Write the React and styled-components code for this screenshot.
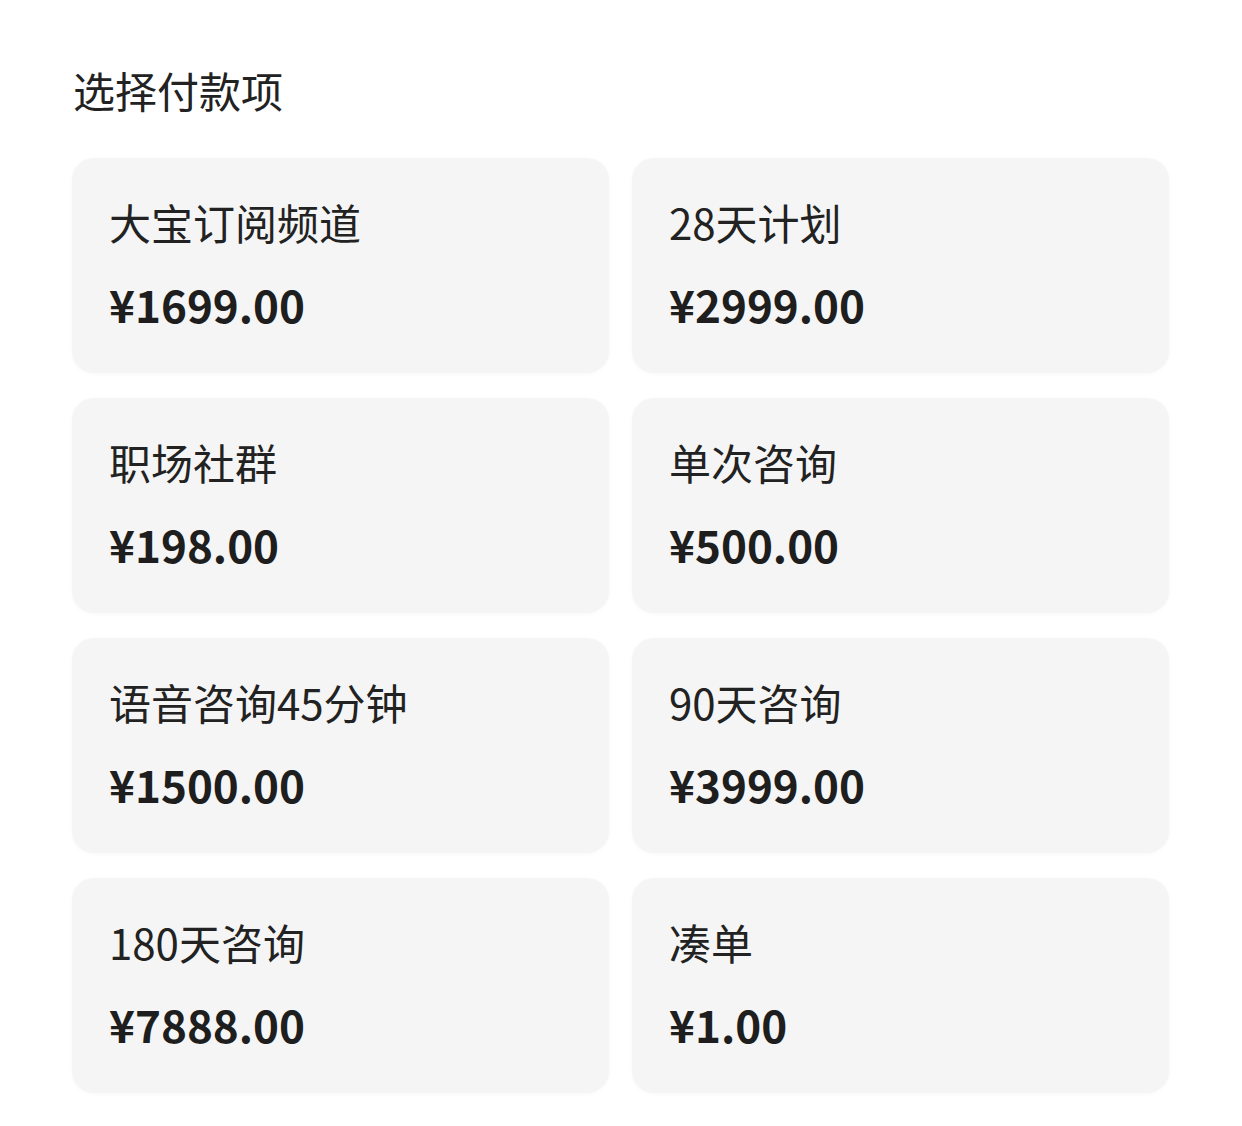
import React from "react";
import styled, { createGlobalStyle } from "styled-components";

const GlobalStyle = createGlobalStyle`
  html, body {
    margin: 0;
    padding: 0;
    background: #ffffff;
  }
  body {
    font-family: "Noto Sans CJK SC", "Noto Sans", sans-serif;
    color: #222222;
  }
`;

const Page = styled.div`
  padding: 62px 73px 32px 72px;
`;

const Heading = styled.h2`
  margin: 0 0 40px 1px;
  font-size: 42px;
  font-weight: 400;
  line-height: 56px;
  color: #222222;
`;

const Grid = styled.div`
  display: grid;
  grid-template-columns: 1fr 1fr;
  column-gap: 23px;
  row-gap: 25px;
`;

const Card = styled.div`
  height: 215px;
  box-sizing: border-box;
  padding: 36px 37px 0;
  background: #f5f5f5;
  border-radius: 22px;
  box-shadow: 0 1px 4px rgba(0, 0, 0, 0.03);
  display: flex;
  flex-direction: column;
  gap: 26px;
`;

const Name = styled.div`
  font-size: 42px;
  line-height: 56px;
  font-weight: 400;
  color: #222222;
`;

const Price = styled.div`
  font-size: 44px;
  line-height: 56px;
  font-weight: 600;
  color: #1e1e1e;
`;

const items = [
  { name: "大宝订阅频道", price: "¥1699.00" },
  { name: "28天计划", price: "¥2999.00" },
  { name: "职场社群", price: "¥198.00" },
  { name: "单次咨询", price: "¥500.00" },
  { name: "语音咨询45分钟", price: "¥1500.00" },
  { name: "90天咨询", price: "¥3999.00" },
  { name: "180天咨询", price: "¥7888.00" },
  { name: "凑单", price: "¥1.00" },
];

export default function App() {
  return (
    <>
      <GlobalStyle />
      <Page>
        <Heading>选择付款项</Heading>
        <Grid>
          {items.map((it) => (
            <Card key={it.name}>
              <Name>{it.name}</Name>
              <Price>{it.price}</Price>
            </Card>
          ))}
        </Grid>
      </Page>
    </>
  );
}
